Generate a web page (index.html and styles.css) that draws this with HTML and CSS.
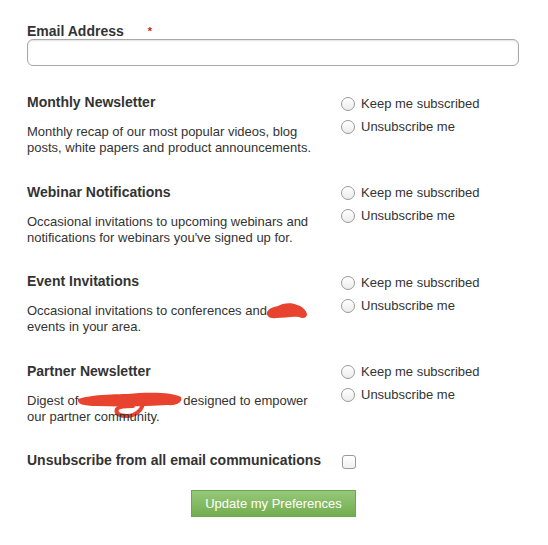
FILE: index.html
```html
<!DOCTYPE html>
<html>
<head>
<meta charset="utf-8">
<link rel="stylesheet" href="styles.css">
</head>
<body>
<form class="form">
  <div class="email-field">
    <label class="email-label">Email Address <span class="req">*</span></label>
    <input class="email-input" type="text">
  </div>

  <div class="pref">
    <div class="pref-text">
      <div class="pref-title">Monthly Newsletter</div>
      <div class="pref-desc">Monthly recap of our most popular videos, blog posts, white papers and product announcements.</div>
    </div>
    <div class="pref-options">
      <label class="opt"><span class="radio"></span>Keep me subscribed</label>
      <label class="opt"><span class="radio"></span>Unsubscribe me</label>
    </div>
  </div>

  <div class="pref">
    <div class="pref-text">
      <div class="pref-title">Webinar Notifications</div>
      <div class="pref-desc">Occasional invitations to upcoming webinars and notifications for webinars you've signed up for.</div>
    </div>
    <div class="pref-options">
      <label class="opt"><span class="radio"></span>Keep me subscribed</label>
      <label class="opt"><span class="radio"></span>Unsubscribe me</label>
    </div>
  </div>

  <div class="pref">
    <div class="pref-text">
      <div class="pref-title">Event Invitations</div>
      <div class="pref-desc">Occasional invitations to conferences and<svg class="redact redact-a" width="42" height="18" viewBox="0 0 42 18"><path d="M1 10 C3 6 8 5 12 4 C16 1 26 0 31 3 C36 4 40 8 41 12 C41 16 37 17 33 15 C26 14 18 16 10 16 C4 17 0 14 1 10 Z" fill="#e8432f"/></svg> events in your area.</div>
    </div>
    <div class="pref-options">
      <label class="opt"><span class="radio"></span>Keep me subscribed</label>
      <label class="opt"><span class="radio"></span>Unsubscribe me</label>
    </div>
  </div>

  <div class="pref">
    <div class="pref-text">
      <div class="pref-title">Partner Newsletter</div>
      <div class="pref-desc">Digest of<svg class="redact redact-b" width="106" height="27" viewBox="0 0 106 27"><path d="M1 7 C20 1 50 3 62 1 C80 0 98 1 104 5 C106 10 100 14 90 13 C75 14 45 15 20 14 C6 14 0 12 1 7 Z" fill="#e8432f"/><path d="M66 10 C66 18 58 24 50 24 C42 24 38 21 40 17 C42 14 50 14 56 14" fill="none" stroke="#e8432f" stroke-width="4" stroke-linecap="round"/></svg>designed to empower our partner community.</div>
    </div>
    <div class="pref-options">
      <label class="opt"><span class="radio"></span>Keep me subscribed</label>
      <label class="opt"><span class="radio"></span>Unsubscribe me</label>
    </div>
  </div>

  <div class="unsub-all">
    <div class="unsub-label">Unsubscribe from all email communications</div>
    <span class="checkbox"></span>
  </div>

  <div class="actions">
    <button class="btn" type="button">Update my Preferences</button>
  </div>
</form>
</body>
</html>
```

FILE: styles.css
```css
html, body {
  margin: 0;
  padding: 0;
  background: #ffffff;
}
body {
  font-family: "Liberation Sans", Arial, Helvetica, sans-serif;
  color: #333333;
  font-size: 13px;
}
.form {
  width: 492px;
  padding: 22px 0 0 27px;
}
.email-field {
  display: flex;
  flex-direction: column;
}
.email-label {
  font-weight: bold;
  font-size: 14px;
  line-height: 18px;
  height: 17px;
}
.req {
  color: #d0251c;
  font-size: 11px;
  margin-left: 20px;
  vertical-align: top;
}
.email-input {
  box-sizing: border-box;
  width: 492px;
  height: 27px;
  margin: 0;
  border: 1px solid #a9a9a9;
  border-radius: 6px;
  background: #fff;
  box-shadow: inset 0 1px 2px rgba(0,0,0,0.12);
  outline: none;
}
.pref {
  display: grid;
  grid-template-columns: 314px 1fr;
  margin-top: 27px;
  height: 63px;
}
.pref + .pref { margin-top: 26.5px; }
.pref-title {
  font-weight: bold;
  font-size: 14px;
  line-height: 18px;
}
.pref-desc {
  margin-top: 13px;
  line-height: 16px;
  width: 290px;
}
.redact {
  display: inline-block;
  vertical-align: top;
}
.redact-a {
  margin: -1px -2px -3px -1px;
}
.redact-b {
  margin: -1px 0 -12px -1px;
}
.pref-options {
  display: flex;
  flex-direction: column;
}
.opt {
  display: flex;
  align-items: center;
  height: 23px;
  line-height: 18px;
  margin-top: -1px;
}
.opt + .opt { margin-top: 0; }
.radio {
  box-sizing: border-box;
  width: 14px;
  height: 14px;
  border-radius: 50%;
  border: 1px solid #9a9a9a;
  background: linear-gradient(#ffffff, #ececec);
  box-shadow: inset 0 1px 1px rgba(255,255,255,0.8);
  margin-right: 6px;
  flex: none;
}
.unsub-all {
  display: grid;
  grid-template-columns: 315px 1fr;
  align-items: start;
  margin-top: 26px;
}
.unsub-label {
  font-weight: bold;
  font-size: 14px;
  line-height: 18px;
}
.checkbox {
  box-sizing: border-box;
  width: 14px;
  height: 14px;
  margin-top: 4px;
  border: 1px solid #9a9a9a;
  border-radius: 3px;
  background: linear-gradient(#ffffff, #f0f0f0);
}
.actions {
  display: flex;
  justify-content: center;
  margin-top: 21px;
}
.btn {
  width: 165px;
  height: 27px;
  border: 1px solid #6aa84a;
  border-radius: 0;
  background: linear-gradient(#96c878, #72ad50);
  color: #ffffff;
  font-family: "Liberation Sans", Arial, sans-serif;
  font-size: 13px;
  padding: 0;
  margin-left: 1px;
}
```
